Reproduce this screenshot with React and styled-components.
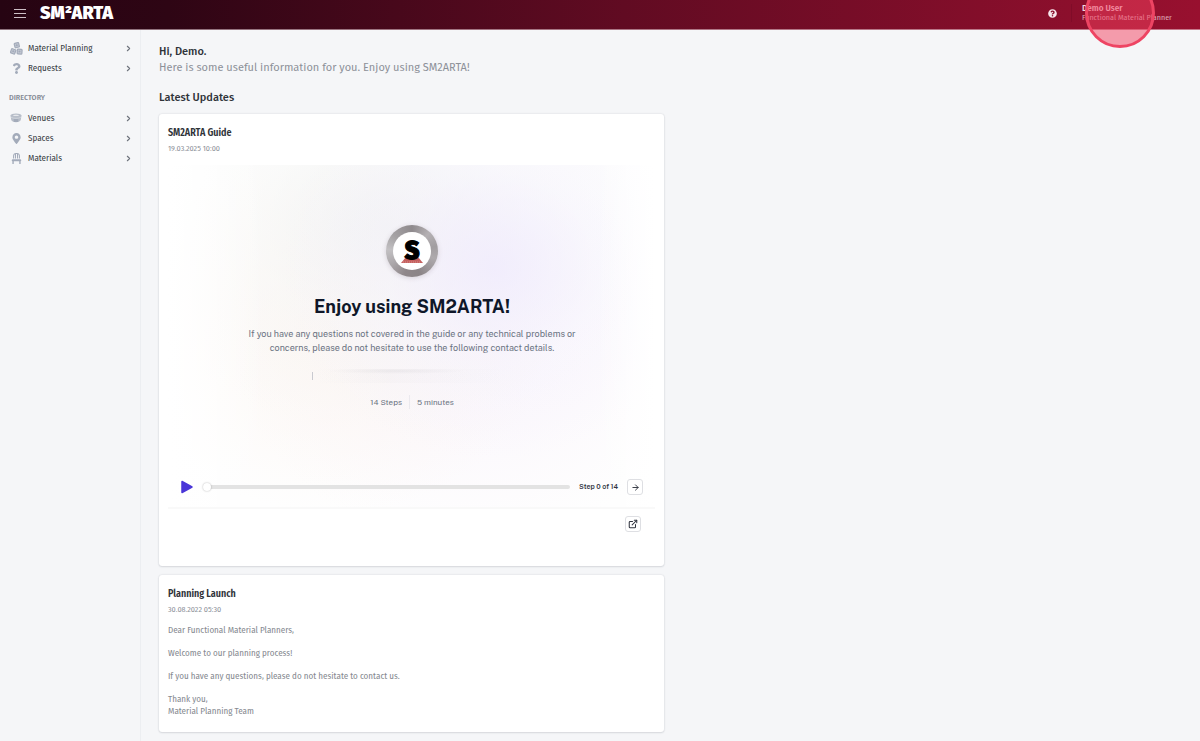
import React, { useState } from 'react';
import styled, { createGlobalStyle } from 'styled-components';
import { FaChair, FaMapMarkerAlt, FaQuestion, FaQuestionCircle } from 'react-icons/fa';
import { ArrowRight, ChevronRight, ExternalLink } from 'lucide-react';

const condensed = '"Fira Sans Condensed", "Roboto Condensed", "Noto Sans", sans-serif';
const regular = '"Fira Sans", "Noto Sans", sans-serif';
const player = '"Public Sans", Inter, "Liberation Sans", sans-serif';

const GlobalStyle = createGlobalStyle`
  * {
    box-sizing: border-box;
  }

  body {
    margin: 0;
    background: #f5f6f8;
    color: #2f3339;
    font-family: ${condensed};
    font-size: 9px;
    line-height: 12px;
  }

  h1, h2, h3, p, ul {
    margin: 0;
    padding: 0;
  }

  button {
    padding: 0;
    font: inherit;
    cursor: pointer;
  }
`;

const Page = styled.div`
  display: flex;
  flex-direction: column;
  min-height: 100vh;
  overflow-x: hidden;
`;

const Header = styled.header`
  display: flex;
  align-items: center;
  height: 30px;
  padding-left: 14px;
  padding-bottom: 3px;
  background: linear-gradient(90deg, #260412 0%, #2e0514 14%, #610b22 52%, #98102f 100%);
  border-bottom: 1px solid rgba(245, 225, 232, 0.5);
  color: #fff;
`;

const MenuButton = styled.button`
  display: flex;
  flex-direction: column;
  justify-content: space-between;
  width: 12px;
  height: 9px;
  margin-right: 14px;
  background: none;
  border: 0;

  span {
    height: 1px;
    background: #cdbfc5;
  }
`;

const Logo = styled.a`
  color: #fff;
  font-family: ${regular};
  font-size: 18px;
  font-weight: 900;
  line-height: 24px;
  text-decoration: none;
`;

const HelpButton = styled.button`
  display: flex;
  margin-left: auto;
  margin-right: 14px;
  background: none;
  border: 0;
  color: #f7e6ec;
  font-size: 9px;
`;

const User = styled.div`
  position: relative;
  width: 129px;
  padding-left: 10px;
  border-left: 1px solid rgba(60, 0, 20, 0.15);
  color: #f3d9e0;
  line-height: 9px;
`;

const UserName = styled.div`
  font-weight: 500;
`;

const UserRole = styled.div`
  color: #dea9b7;
  font-size: 8px;
`;

const ClickMarker = styled.span`
  position: absolute;
  top: -26px;
  left: 13px;
  z-index: 2;
  width: 70px;
  height: 70px;
  background: rgba(244, 63, 94, 0.5);
  border: 3px solid #ee4463;
  border-radius: 50%;
  pointer-events: none;
`;

const Body = styled.div`
  display: flex;
  flex: 1;
`;

const Sidebar = styled.nav`
  flex: 0 0 141px;
  padding: 8px 7px 8px 9px;
  border-right: 1px solid #eceef1;

  ul {
    list-style: none;
  }
`;

const SidebarTitle = styled.h2`
  padding-top: 10px;
  color: #868b95;
  font-size: 8px;
  font-weight: 500;
  line-height: 20px;
`;

const NavLink = styled.a`
  display: flex;
  align-items: center;
  height: 20px;
  color: #3a3e45;
  text-decoration: none;
`;

const NavIcon = styled.span`
  display: flex;
  justify-content: center;
  width: 14px;
  margin-right: 5px;
  color: #a3abba;
  font-size: 11px;
`;

const NavArrow = styled(ChevronRight)`
  margin-left: auto;
  color: #6e737c;
`;

const Content = styled.main`
  flex: 1;
  min-width: 0;
  padding: 14px 20px 7px 18px;
`;

const Greeting = styled.h1`
  font-family: ${regular};
  font-size: 11px;
  font-weight: 500;
  line-height: 16px;
`;

const Intro = styled.p`
  color: #8d9199;
  font-family: ${regular};
  font-size: 11px;
  line-height: 16px;
`;

const SectionTitle = styled.h2`
  margin: 14px 0 8px;
  font-family: ${regular};
  font-size: 11px;
  font-weight: 500;
  line-height: 16px;
`;

const Updates = styled.div`
  display: grid;
  grid-template-columns: 1fr 1fr;
  gap: 9px 11px;
`;

const Card = styled.article`
  grid-column: 1;
  padding: 11px 9px 15px;
  background: #fff;
  border-radius: 3px;
  box-shadow: 0 0 2px rgba(30, 40, 60, 0.16), 0 1px 2px rgba(30, 40, 60, 0.1);
`;

const CardTitle = styled.h3`
  font-size: 10px;
  font-weight: 600;
  line-height: 16px;
`;

const CardDate = styled.time`
  display: block;
  color: #8d9199;
  font-size: 8px;
  line-height: 16px;
`;

const CardText = styled.div`
  margin-top: 6px;
  color: #868a91;

  p + p {
    margin-top: 11px;
  }
`;

const Guide = styled.section`
  display: flex;
  flex-direction: column;
  align-items: center;
  height: 344px;
  margin-top: 8px;
  padding: 60px 12px 12px 13px;
  background:
    linear-gradient(90deg, #fff 0%, transparent 20%, transparent 88%, #fff 100%),
    radial-gradient(ellipse 44% 56% at 67% 30%, rgba(240, 235, 253, 0.85), rgba(245, 242, 254, 0.4) 50%, transparent),
    radial-gradient(ellipse 56% 60% at 45% 18%, rgba(240, 241, 241, 0.85), rgba(246, 247, 246, 0.45) 50%, transparent),
    radial-gradient(ellipse 44% 54% at 34% 48%, rgba(252, 245, 240, 0.85), transparent),
    radial-gradient(ellipse 48% 54% at 62% 56%, rgba(249, 243, 251, 0.8), transparent),
    #fefefe;
  border-bottom: 2px solid #f9f9f9;
  font-family: ${player};
`;

const Badge = styled.div`
  display: flex;
  align-items: center;
  justify-content: center;
  width: 52px;
  height: 52px;
  background: conic-gradient(#8f8a8d, #b5b1b4 12%, #a19da0 22%, #aeaaad 30%, #8b8487 45%, #8f878a 55%, #aca8ab 66%, #c2c0c2 76%, #a5a2a4 86%, #8f8a8d);
  border-radius: 50%;
  box-shadow: 0 1px 5px rgba(80, 60, 70, 0.18);
`;

const BadgeInner = styled.div`
  display: grid;
  place-items: center;
  width: 38px;
  height: 38px;
  background: #fff;
  border-radius: 50%;

  svg, span {
    grid-area: 1 / 1;
  }

  svg {
    align-self: end;
    margin-bottom: 7px;
  }

  span {
    z-index: 1;
    color: #000;
    font-family: ${regular};
    font-size: 25px;
    font-weight: 900;
    line-height: 38px;
    -webkit-text-stroke: 1px #000;
  }
`;

const GuideTitle = styled.h2`
  margin-top: 17px;
  color: #0f1729;
  font-size: 18px;
  font-weight: 700;
  line-height: 26px;
`;

const GuideText = styled.p`
  max-width: 350px;
  margin-top: 7px;
  color: #6b7382;
  font-size: 9px;
  line-height: 14px;
  text-align: center;
`;

const ContactPlaceholder = styled.div`
  display: flex;
  align-items: center;
  width: 200px;
  height: 14px;
  margin-top: 14px;
  background:
    radial-gradient(ellipse 35% 3px at 42% 2px, rgba(90, 90, 100, 0.07), transparent),
    linear-gradient(90deg, transparent, rgba(90, 90, 100, 0.02) 40%, transparent);

  &::before {
    content: '';
    width: 1px;
    height: 8px;
    background: #c9cad0;
  }
`;

const Facts = styled.div`
  display: flex;
  margin-top: 12px;
  color: #6b7382;
  font-size: 8px;
  line-height: 14px;

  span + span {
    margin-left: 7px;
    padding-left: 7px;
    border-left: 1px solid #ebe9ee;
  }
`;

const Controls = styled.div`
  display: flex;
  align-items: center;
  align-self: stretch;
  margin-top: auto;
`;

const PlayButton = styled.button`
  display: flex;
  margin-right: 10px;
  background: none;
  border: 0;
`;

const Progress = styled.input`
  flex: 1;
  min-width: 0;
  height: 10px;
  margin: 0 9px 0 0;
  background: transparent;
  appearance: none;

  &::-webkit-slider-runnable-track {
    height: 4px;
    background: #e3e3e3;
    border-radius: 2px;
  }

  &::-webkit-slider-thumb {
    width: 8px;
    height: 8px;
    margin-top: -2px;
    background: #fff;
    border: 0;
    border-radius: 50%;
    box-shadow: 0 0 2px rgba(0, 0, 0, 0.3);
    appearance: none;
  }
`;

const StepLabel = styled.label`
  margin-right: 9px;
  color: #30343f;
  font-size: 7px;
  font-weight: 600;
`;

const IconButton = styled.button`
  display: flex;
  align-items: center;
  justify-content: center;
  width: 16px;
  height: 16px;
  background: #fff;
  border: 1px solid #dedfe3;
  border-radius: 3px;
  color: #30343f;
`;

const CardActions = styled.div`
  display: flex;
  justify-content: flex-end;
  padding: 7px 14px 19px;
`;

const BoxesIcon = () => (
  <svg width="13" height="13" viewBox="0 0 26 26" fill="#c3c8d3" stroke="currentColor" strokeWidth="2.4" strokeLinejoin="round">
    <rect x="9" y="2" width="9" height="9" rx="1.5" transform="rotate(-14 13 6)" />
    <rect x="2" y="14" width="9" height="9" rx="1.5" transform="rotate(20 6 18)" />
    <rect x="14.5" y="14.5" width="9.5" height="9.5" rx="1.5" transform="rotate(4 19 19)" />
    <circle cx="13.5" cy="6.5" r="1" />
    <circle cx="6.5" cy="18.5" r="1" />
    <circle cx="19" cy="19" r="1" />
  </svg>
);

const StadiumIcon = () => (
  <svg width="12" height="10" viewBox="0 0 24 20" fill="currentColor">
    <path d="M1 5c0-2.5 5-4 11-4s11 1.500 11 4l-1.500 9c-.5 2.300-4.500 4.500-9.500 4.500S3 16.300 2.500 14z" opacity=".75" />
    <ellipse cx="12" cy="4.500" rx="6" ry="1.200" fill="#f5f6f8" />
    <path d="M7.500 12h9v6h-9z" />
    <path d="M2 8.500c6 3 14 3 20 0" fill="none" stroke="#dde0e6" strokeWidth="1.200" />
  </svg>
);

const planningLinks = [
  { label: 'Material Planning', icon: <BoxesIcon /> },
  { label: 'Requests', icon: <FaQuestion /> },
];

const directoryLinks = [
  { label: 'Venues', icon: <StadiumIcon /> },
  { label: 'Spaces', icon: <FaMapMarkerAlt /> },
  { label: 'Materials', icon: <FaChair /> },
];

const NavList = ({ links }) => (
  <ul>
    {links.map(({ label, icon }) => (
      <li key={label}>
        <NavLink href="#">
          <NavIcon>{icon}</NavIcon>
          {label}
          <NavArrow size={9} strokeWidth={3} />
        </NavLink>
      </li>
    ))}
  </ul>
);

const GuidePlayer = () => {
  const [step, setStep] = useState(0);

  return (
    <Guide>
      <Badge>
        <BadgeInner>
          <svg width="22" height="6" viewBox="0 0 22 6">
            <path d="M5 0h12l5 6H0z" fill="#c4605f" />
            <path d="M2 5h18" stroke="#d98d8b" strokeWidth="1" strokeDasharray="1 1" />
          </svg>
          <span>S</span>
        </BadgeInner>
      </Badge>
      <GuideTitle>Enjoy using SM2ARTA!</GuideTitle>
      <GuideText>
        If you have any questions not covered in the guide or any technical problems or
        concerns, please do not hesitate to use the following contact details.
      </GuideText>
      <ContactPlaceholder />
      <Facts>
        <span>14 Steps</span>
        <span>5 minutes</span>
      </Facts>
      <Controls>
        <PlayButton type="button" aria-label="Play">
          <svg width="12" height="14" viewBox="0 0 12 14">
            <path d="M1 1.500v11L11 7z" fill="#4a36d8" stroke="#4a36d8" strokeWidth="1.500" strokeLinejoin="round" />
          </svg>
        </PlayButton>
        <Progress
          id="guide-step"
          type="range"
          min="0"
          max="14"
          value={step}
          onChange={(e) => setStep(Number(e.target.value))}
        />
        <StepLabel htmlFor="guide-step">Step {step} of 14</StepLabel>
        <IconButton type="button" aria-label="Next step" onClick={() => setStep(Math.min(step + 1, 14))}>
          <ArrowRight size={9} strokeWidth={2.5} />
        </IconButton>
      </Controls>
    </Guide>
  );
};

const App = () => {
  return (
    <Page>
      <GlobalStyle />
      <Header>
        <MenuButton type="button" aria-label="Menu">
          <span />
          <span />
          <span />
        </MenuButton>
        <Logo href="#">SM²ARTA</Logo>
        <HelpButton type="button" aria-label="Help">
          <FaQuestionCircle />
        </HelpButton>
        <User>
          <UserName>Demo User</UserName>
          <UserRole>Functional Material Planner</UserRole>
          <ClickMarker />
        </User>
      </Header>

      <Body>
        <Sidebar>
          <NavList links={planningLinks} />
          <SidebarTitle>DIRECTORY</SidebarTitle>
          <NavList links={directoryLinks} />
        </Sidebar>

        <Content>
          <Greeting>Hi, Demo.</Greeting>
          <Intro>Here is some useful information for you. Enjoy using SM2ARTA!</Intro>
          <SectionTitle>Latest Updates</SectionTitle>

          <Updates>
            <Card>
              <CardTitle>SM2ARTA Guide</CardTitle>
              <CardDate>19.03.2025 10:00</CardDate>
              <GuidePlayer />
              <CardActions>
                <IconButton type="button" aria-label="Open in new tab">
                  <ExternalLink size={10} strokeWidth={2.5} />
                </IconButton>
              </CardActions>
            </Card>

            <Card>
              <CardTitle>Planning Launch</CardTitle>
              <CardDate>30.08.2022 05:30</CardDate>
              <CardText>
                <p>Dear Functional Material Planners,</p>
                <p>Welcome to our planning process!</p>
                <p>If you have any questions, please do not hesitate to contact us.</p>
                <p>
                  Thank you,
                  <br />
                  Material Planning Team
                </p>
              </CardText>
            </Card>
          </Updates>
        </Content>
      </Body>
    </Page>
  );
};

export default App;
